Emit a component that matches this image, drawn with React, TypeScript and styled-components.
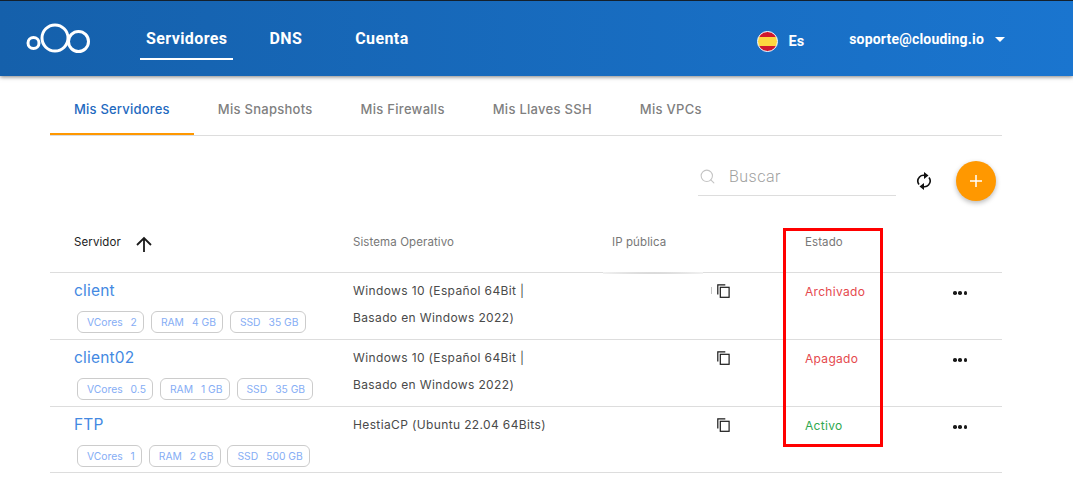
import styled, { createGlobalStyle } from 'styled-components';
import { Search } from 'lucide-react';

const GlobalStyle = createGlobalStyle`
  html, body {
    margin: 0;
    padding: 0;
    background: #fff;
    overflow: hidden;
  }
  * {
    box-sizing: border-box;
  }
`;

const Page = styled.div`
  position: relative;
  width: 1073px;
  height: 483px;
  overflow: hidden;
  font-family: Inter, 'Liberation Sans', sans-serif;
`;

const Header = styled.header`
  height: 76px;
  border-top: 1px solid #14202c;
  background: linear-gradient(90deg, #1560ab 0%, #1a75cf 100%);
  box-shadow: 0 1px 4px rgba(0, 0, 0, 0.5);
  display: flex;
  align-items: flex-start;
  padding-left: 26px;
  font-family: Roboto, sans-serif;
  color: #fff;
`;

const Logo = styled.svg`
  width: 65px;
  height: 32px;
  margin-top: 20px;
  flex: none;
`;

const Nav = styled.nav`
  display: flex;
  margin-left: 49px;
`;

const NavItem = styled.a<{ $active?: boolean }>`
  display: block;
  height: 59px;
  padding: 28px 6px 0;
  margin-right: ${(props) => (props.$active ? '30px' : '41px')};
  font-size: 16px;
  line-height: 20px;
  font-weight: 700;
  letter-spacing: 0.4px;
  border-bottom: 2px solid ${(props) => (props.$active ? '#fff' : 'transparent')};
`;

const HeaderRight = styled.div`
  display: flex;
  align-items: flex-start;
  margin-left: auto;
  padding-right: 68px;
`;

const Flag = styled.span`
  display: block;
  width: 21px;
  height: 21px;
  margin-top: 30px;
  border-radius: 50%;
  border: 1px solid #fff;
  background: linear-gradient(#d0172e 0 28%, #fdd640 28% 72%, #d0172e 72%);
`;

const Lang = styled.span`
  margin: 33px 45px 0 11px;
  font-size: 14.5px;
  line-height: 16px;
  font-weight: 700;
`;

const Email = styled.span`
  margin-top: 30px;
  font-size: 14px;
  line-height: 17px;
  font-weight: 700;
  letter-spacing: 0.2px;
`;

const Caret = styled.span`
  width: 0;
  height: 0;
  margin: 36px 0 0 11px;
  border-left: 5px solid transparent;
  border-right: 5px solid transparent;
  border-top: 5px solid #fff;
`;

const Content = styled.main`
  margin: 0 71px 0 50px;
`;

const Tabs = styled.div`
  display: flex;
  height: 60px;
  border-bottom: 1px solid #ddd;
`;

const Tab = styled.a<{ $active?: boolean }>`
  display: block;
  height: 59px;
  padding: 24px 24px 0;
  font-size: 13px;
  line-height: 18px;
  font-weight: 500;
  letter-spacing: ${(props) => (props.$active ? '0.2px' : '0.28px')};
  color: ${(props) => (props.$active ? '#1f6ac0' : '#808080')};
  border-bottom: 2px solid ${(props) => (props.$active ? '#ff9800' : 'transparent')};
`;

const Toolbar = styled.div`
  display: flex;
  align-items: flex-start;
  height: 92px;
  padding: 25px 6px 0 648px;
`;

const SearchBox = styled.div`
  display: flex;
  align-items: center;
  width: 198px;
  height: 35px;
  padding: 0 0 3px 1px;
  border-bottom: 1px solid #ddd;
  color: #c4c4c4;
`;

const SearchLabel = styled.span`
  margin-left: 13px;
  font-family: Roboto, sans-serif;
  font-size: 16px;
  font-weight: 300;
  letter-spacing: 0.5px;
  color: #9e9e9e;
`;

const RefreshIcon = styled.svg`
  width: 16px;
  height: 18px;
  margin: 11px 0 0 20px;
`;

const AddButton = styled.button`
  width: 40px;
  height: 40px;
  margin: 0 0 0 24px;
  padding: 0;
  border: 0;
  border-radius: 50%;
  background: #ff9800;
  box-shadow: 0 2px 5px rgba(0, 0, 0, 0.28);
  display: flex;
  align-items: center;
  justify-content: center;
`;

const Row = styled.div<{ $height: number }>`
  display: grid;
  grid-template-columns: 303px 259px 105px 88px 147px 50px;
  height: ${(props) => props.$height}px;
  border-bottom: 1px solid #ddd;
`;

const HeadCell = styled.div<{ $dark?: boolean }>`
  display: flex;
  align-items: flex-start;
  padding-top: 6px;
  font-size: 11.5px;
  line-height: 16px;
  font-weight: 400;
  letter-spacing: 0.1px;
  color: ${(props) => (props.$dark ? '#222' : '#777')};
`;

const ServerHead = styled(HeadCell)`
  padding-left: 24px;
`;

const SortArrow = styled.svg`
  width: 20px;
  height: 20px;
  margin-left: 13px;
`;

const ServerCell = styled.div`
  padding: 8px 0 0 24px;
`;

const ServerName = styled.div`
  font-size: 15.5px;
  line-height: 20px;
  letter-spacing: 0.2px;
  color: #4389e2;
`;

const Specs = styled.div`
  display: flex;
  gap: 6.5px;
  margin: 10px 0 0 3px;
`;

const Spec = styled.span`
  display: flex;
  gap: 8px;
  height: 22px;
  padding: 0 6.5px 0 9px;
  align-items: center;
  border: 1px solid #ccc;
  border-radius: 6px;
  font-size: 10.3px;
  color: #85adf5;
  white-space: nowrap;
`;

const OsCell = styled.div`
  padding-top: 5px;
  font-size: 12px;
  line-height: 26.5px;
  letter-spacing: 0.37px;
  color: #4a4a4a;
`;

const IpCell = styled.div`
  position: relative;
`;

const Smudge = styled.div`
  position: absolute;
  left: -9px;
  top: -1px;
  width: 100px;
  height: 2px;
  background: radial-gradient(ellipse at center, #c9c9c9, #f4f4f4 85%, #fff);
`;

const Residue = styled.div`
  position: absolute;
  left: 99px;
  top: 14px;
  width: 1px;
  height: 7px;
  background: #c4c4c4;
`;

const CopyCell = styled.div`
  padding-top: 11px;
`;

const CopyIcon = styled.svg`
  display: block;
  width: 13px;
  height: 14px;
`;

const StateCell = styled.div<{ $color: string }>`
  padding: 11px 0 0 0;
  font-size: 12px;
  line-height: 16px;
  letter-spacing: 0.3px;
  color: ${(props) => props.$color};
`;

const MoreCell = styled.div`
  display: flex;
  gap: 1.75px;
  padding: 18px 0 0 1px;
`;

const Dot = styled.span`
  width: 3.5px;
  height: 3.5px;
  border-radius: 50%;
  background: #1a1a1a;
`;

const Highlight = styled.div`
  position: absolute;
  left: 783px;
  top: 228px;
  width: 100px;
  height: 219px;
  border: 3px solid #f00;
`;

const servers = [
  {
    name: 'client',
    os: ['Windows 10 (Español 64Bit |', 'Basado en Windows 2022)'],
    specs: [['VCores', '2'], ['RAM', '4 GB'], ['SSD', '35 GB']],
    state: 'Archivado',
    color: '#e5484d',
    height: 67,
  },
  {
    name: 'client02',
    os: ['Windows 10 (Español 64Bit |', 'Basado en Windows 2022)'],
    specs: [['VCores', '0.5'], ['RAM', '1 GB'], ['SSD', '35 GB']],
    state: 'Apagado',
    color: '#e5484d',
    height: 67,
  },
  {
    name: 'FTP',
    os: ['HestiaCP (Ubuntu 22.04 64Bits)'],
    specs: [['VCores', '1'], ['RAM', '2 GB'], ['SSD', '500 GB']],
    state: 'Activo',
    color: '#2fa84f',
    height: 66,
  },
];

function App() {
  return (
    <Page>
      <GlobalStyle />
      <Header>
        <Logo viewBox="0 0 65 32" fill="none" stroke="#fff" strokeWidth="3">
          <circle cx="7.5" cy="22" r="5.5" />
          <circle cx="29" cy="17" r="13" />
          <circle cx="52.5" cy="20.500" r="10" />
        </Logo>
        <Nav>
          <NavItem $active>Servidores</NavItem>
          <NavItem>DNS</NavItem>
          <NavItem>Cuenta</NavItem>
        </Nav>
        <HeaderRight>
          <Flag />
          <Lang>Es</Lang>
          <Email>soporte@clouding.io</Email>
          <Caret />
        </HeaderRight>
      </Header>
      <Content>
        <Tabs>
          <Tab $active>Mis Servidores</Tab>
          <Tab>Mis Snapshots</Tab>
          <Tab>Mis Firewalls</Tab>
          <Tab>Mis Llaves SSH</Tab>
          <Tab>Mis VPCs</Tab>
        </Tabs>
        <Toolbar>
          <SearchBox>
            <Search size={17} strokeWidth={1.5} />
            <SearchLabel>Buscar</SearchLabel>
          </SearchBox>
          <RefreshIcon viewBox="0 0 16 18" fill="none" stroke="#111" strokeWidth="1.6">
            <path d="M3 12.5A6 6 0 0 1 3.500 5C5 3.400 7 3 9 3.500" />
            <path d="M13 5.5a6 6 0 0 1-.5 7.500C11 14.600 9 15 7 14.500" />
            <path d="M8 0l4.500 3.500L8 7z" fill="#111" stroke="none" />
            <path d="M8 11l-4.500 3.500L8 18z" fill="#111" stroke="none" />
          </RefreshIcon>
          <AddButton aria-label="Añadir">
            <svg width="14" height="14" viewBox="0 0 14 14" stroke="#fff" strokeWidth="1.500">
              <path d="M7 1v12M1 7h12" />
            </svg>
          </AddButton>
        </Toolbar>
        <Row $height={45}>
          <ServerHead $dark>
            Servidor
            <SortArrow viewBox="0 0 20 20" fill="none" stroke="#1a1a1a" strokeWidth="1.800">
              <path d="M10 18V4M3 11l7-7 7 7" />
            </SortArrow>
          </ServerHead>
          <HeadCell>Sistema Operativo</HeadCell>
          <HeadCell>IP pública</HeadCell>
          <div />
          <HeadCell>Estado</HeadCell>
          <div />
        </Row>
        {servers.map((server, index) => (
          <Row key={server.name} $height={server.height}>
            <ServerCell>
              <ServerName>{server.name}</ServerName>
              <Specs>
                {server.specs.map(([label, value]) => (
                  <Spec key={label}>
                    <span>{label}</span>
                    <span>{value}</span>
                  </Spec>
                ))}
              </Specs>
            </ServerCell>
            <OsCell>
              {server.os.map((line) => (
                <div key={line}>{line}</div>
              ))}
            </OsCell>
            <IpCell>
              {index === 0 && <Smudge />}
              {index === 0 && <Residue />}
            </IpCell>
            <CopyCell>
              <CopyIcon viewBox="0 0 13 14" fill="none" stroke="#1a1a1a" strokeWidth="1.200">
                <path d="M.8 10.500V.8h7.500" />
                <rect x="3.300" y="3.300" width="8.800" height="10" />
              </CopyIcon>
            </CopyCell>
            <StateCell $color={server.color}>{server.state}</StateCell>
            <MoreCell>
              <Dot />
              <Dot />
              <Dot />
            </MoreCell>
          </Row>
        ))}
      </Content>
      <Highlight />
    </Page>
  );
}

export default App;
